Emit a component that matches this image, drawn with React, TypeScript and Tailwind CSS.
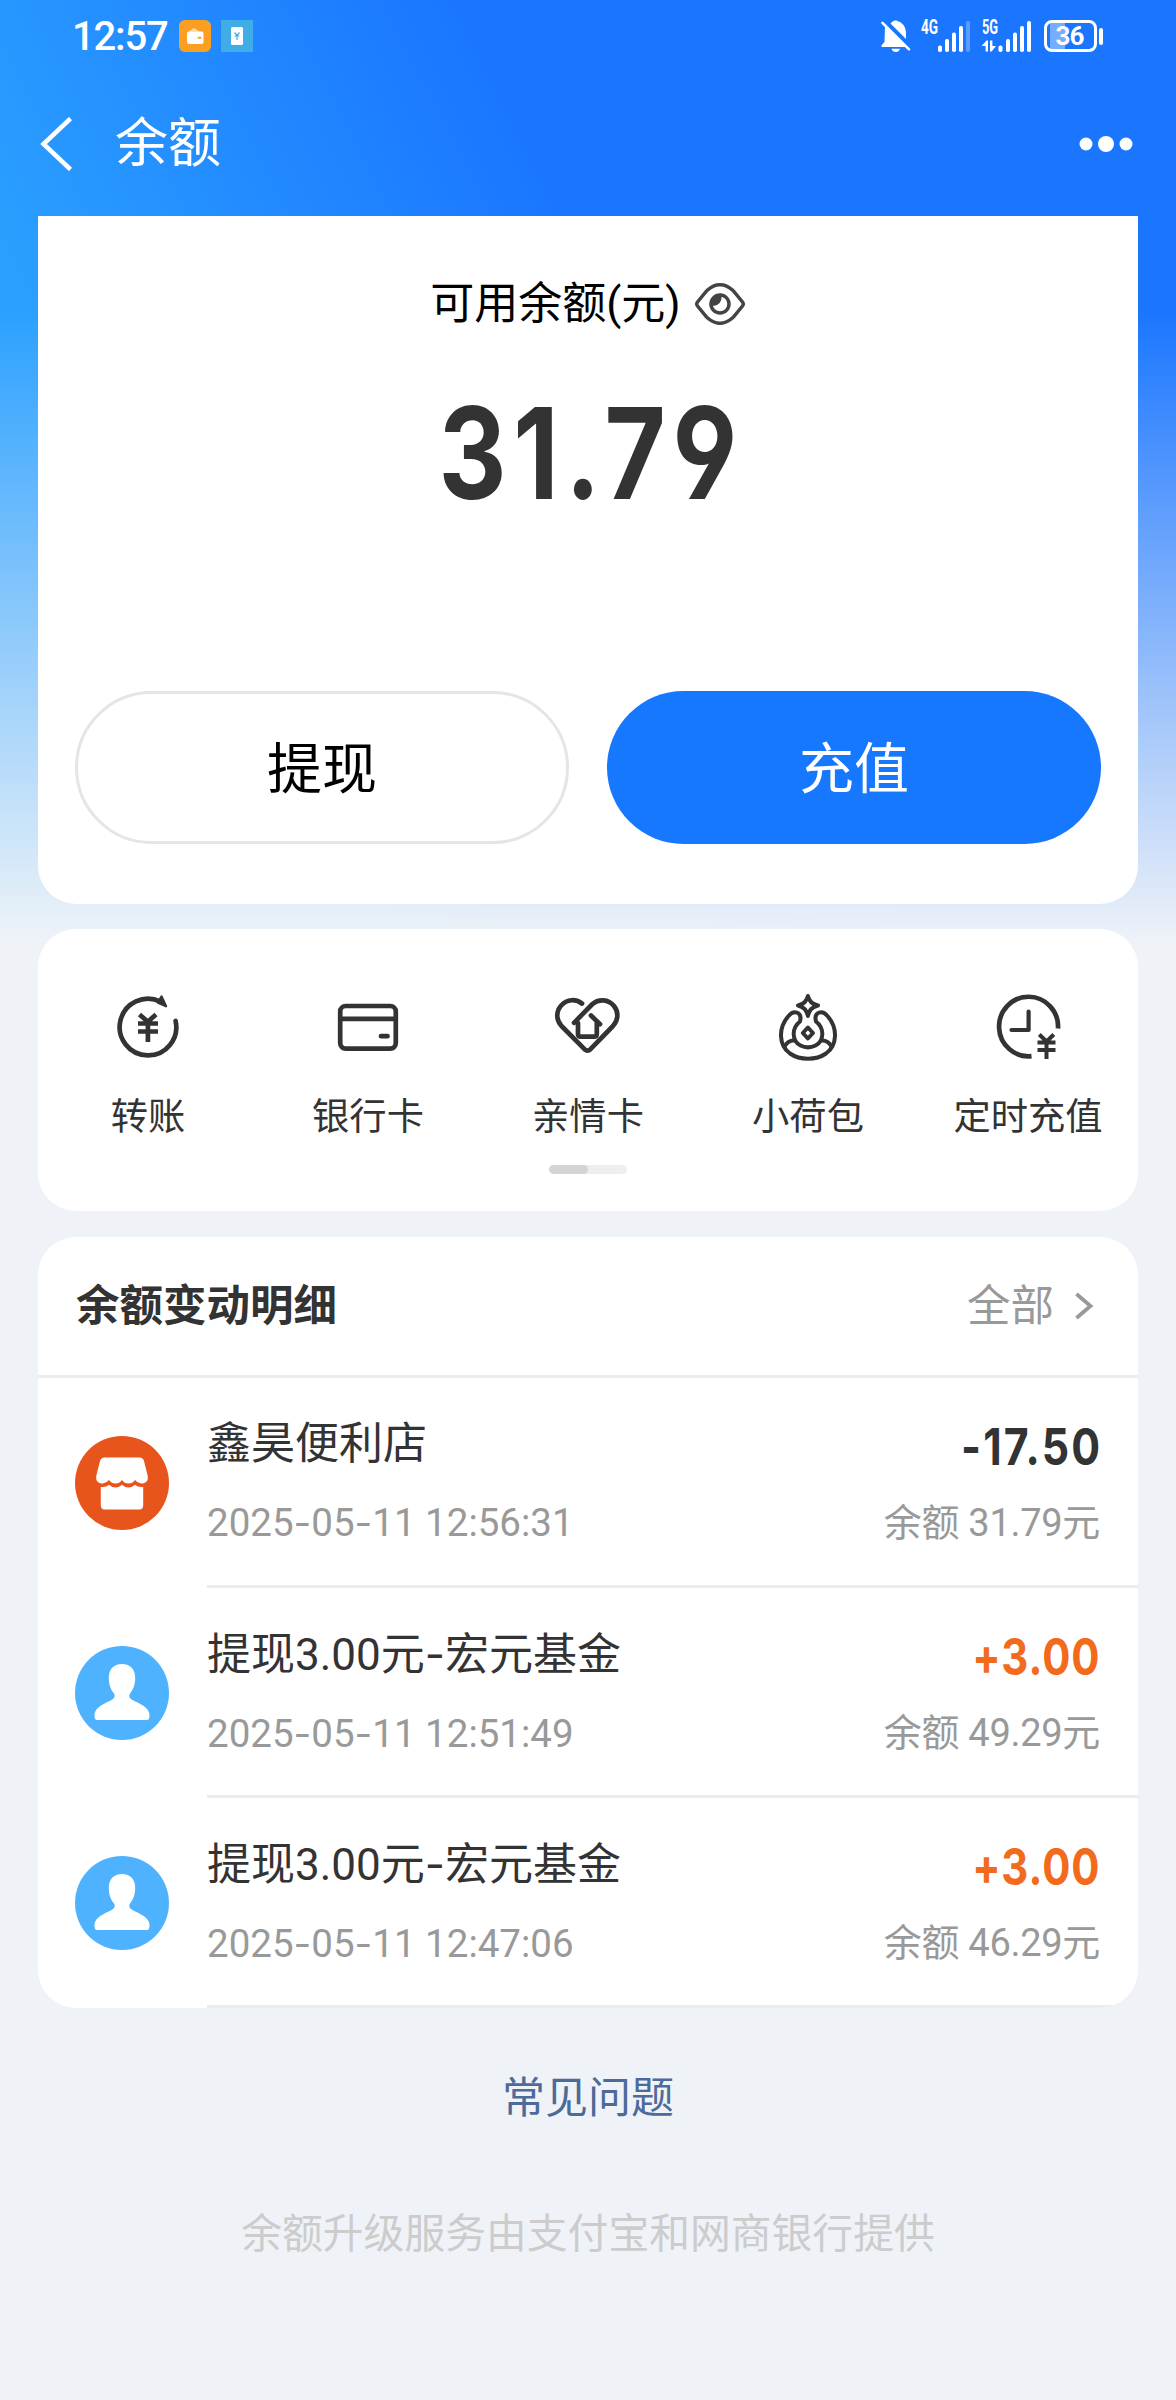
import React from "react";

type Entry = {
  kind: "shop" | "person";
  title: string;
  time: string;
  amount: string;
  balance: string;
};

const entries: Entry[] = [
  { kind: "shop", title: "鑫昊便利店", time: "2025-05-11 12:56:31", amount: "-17.50", balance: "余额 31.79元" },
  { kind: "person", title: "提现3.00元-宏元基金", time: "2025-05-11 12:51:49", amount: "+3.00", balance: "余额 49.29元" },
  { kind: "person", title: "提现3.00元-宏元基金", time: "2025-05-11 12:47:06", amount: "+3.00", balance: "余额 46.29元" },
];

const iconProps = {
  width: 70,
  height: 70,
  viewBox: "0 0 70 70",
  fill: "none",
  stroke: "#333",
  strokeWidth: 4.7,
  strokeLinecap: "round" as const,
  strokeLinejoin: "round" as const,
};

function TransferIcon() {
  return (
    <svg {...iconProps}>
      <path d="M62.6 29A28.3 28.3 0 1 1 47.5 9.7" />
      <path d="M48.5 4.5 53 14.2l-8-3.6z" fill="#333" strokeWidth="2.4" />
      <path d="M26.5 22.5 34.8 29.8 43 22.5M25 31.5h20M25 39.5h20M34.9 30v20" strokeLinecap="butt" />
    </svg>
  );
}

function BankCardIcon() {
  return (
    <svg {...iconProps}>
      <rect x="7.2" y="14" width="55.6" height="42.6" rx="5.5" />
      <path d="M7.5 26.8h55M48 44.2h6.5" />
    </svg>
  );
}

function FamilyCardIcon() {
  return (
    <svg {...iconProps}>
      <path d="M29 11.600C23 6.500 14 7.200 8.200 13.500 2.800 19.500 3 28 8.500 34L31.500 57.200Q34.500 60 37.500 57.200L60 34C65.500 28 65.800 20 61 14 55.500 7 45.500 6.600 39.500 12L21 30.800" />
      <path d="M38 23.500 47 32.200M25 31v11q0 2.700 2.700 2.700h13.400q2.700 0 2.700-2.700V31" />
    </svg>
  );
}

function PouchIcon() {
  return (
    <svg {...iconProps} strokeWidth={4}>
      <path d="M34.900 4Q36.400 11.500 45 13.500 36.400 15.500 34.900 24 33.400 15.500 25 13.500 33.400 11.500 34.900 4Z" />
      <path d="M27 29.500C29.500 20 21 17.500 15.500 24 5 36 5.500 53 17 61.500 27 68.500 43 68.500 53 61.500 64.500 53 65 36 54.500 24 49 17.500 40.500 20 43 29.500 51.500 36 51.500 49 42.500 53.500 37.500 56 32.500 56 27.500 53.500 18.500 49 18.500 36 27 29.500Z" />
      <path d="M11.500 54.500q3.500-6 9-6M58.500 54.500q-3.500-6-9-6" />
      <path d="M34.900 35.500 40 41 34.900 46.500 29.800 41z" />
    </svg>
  );
}

function ScheduleIcon() {
  return (
    <svg {...iconProps} strokeLinecap="butt">
      <path d="M65 36.500A29.500 29.800 0 1 0 38.500 64.200" />
      <path d="M35.600 19.500V38H18.500" strokeLinecap="round" strokeWidth="4.200" />
      <path d="M46.300 42.500 53.500 49.500 60.800 42.500M44.500 50.500h18M44.500 58h18M53.500 49v18" strokeWidth="4" />
    </svg>
  );
}

function ShopAvatar() {
  return (
    <svg width="94" height="94" viewBox="0 0 94 94" className="shrink-0">
      <circle cx="47" cy="47" r="47" fill="#e8551c" />
      <path
        d="M29.500 21.500h35q3.500 0 4.500 3.500l3.500 14q.8 4.500-.5 6-2.500 3-6 2.500-3.500-.3-6-3.500-2.500 3.500-6.500 3.500t-6.500-3.500q-2.500 3.500-6.500 3.500T34 44q-2.500 3.200-6 3.500-3.500.5-6-2.500-1.300-1.500-.5-6L25 25q1-3.500 4.500-3.500Z"
        fill="#fff"
      />
      <path
        d="M25.800 50.800q4.700 1 8.200-2 3 2.800 6.500 2.800t6.500-2.800q3 2.800 6.500 2.800t6.500-2.800q3.500 3 8.200 2V69q0 4.500-4 4.500H29.800q-4 0-4-4.500Z"
        fill="#fff"
      />
    </svg>
  );
}

function PersonAvatar() {
  return (
    <svg width="94" height="94" viewBox="0 0 94 94" className="shrink-0">
      <circle cx="47" cy="47" r="47" fill="#4eb2ff" />
      <path
        d="M47 18c8.500 0 13.200 5.500 13.200 14 0 7-2.200 11.500-5.200 15.500-1.500 3-.5 4.500 2 6.200C64 57.500 74.500 61 74.500 69q.2 5-2.500 5H22q-2.700 0-2.500-5c0-8 10.500-11.500 17.500-15.300 2.500-1.700 3.500-3.200 2-6.200-3-4-5.200-8.500-5.200-15.500C33.800 23.500 38.500 18 47 18Z"
        fill="#fff"
      />
    </svg>
  );
}

function StatusBar() {
  return (
    <div className="flex h-[72px] items-center pr-[73px] pl-[72px]">
      <span className="w-[98px] pt-[2px] text-[40px] leading-[70px] font-medium tracking-[-1.200px] text-white">12:57</span>
      <svg width="32" height="32" viewBox="0 0 32 32" className="ml-[9px]">
        <rect width="32" height="32" rx="6" fill="#fb9f22" />
        <path d="M10 11.500 15 8l5.500 3.500z" fill="#ffdcae" />
        <rect x="8" y="11.500" width="16.500" height="12.500" rx="2" fill="#fff" />
        <rect x="18.500" y="16.800" width="4" height="2" rx="1" fill="#fb9f22" />
      </svg>
      <svg width="32" height="32" viewBox="0 0 32 32" className="ml-[10px]">
        <rect width="32" height="32" fill="#41ade6" />
        <rect x="10" y="7" width="12" height="18" rx="1.500" fill="#fff" />
        <path d="M13.500 12.500 16 15.500 18.500 12.500M13.500 16h5M16 15.500V20" stroke="#41ade6" strokeWidth="1.200" fill="none" />
      </svg>
      <div className="ml-auto flex items-center">
        <svg width="30" height="32" viewBox="0 0 30 32">
          <path d="M9.500 3.500Q11 1.500 13.500 0.500h2Q24 3 25 12v7Z" fill="#fff" />
          <path d="M4 6 25 27H.5v-1.800L3.500 22Z" fill="#fff" />
          <path d="M10.500 28.800h8.500q-1 3.200-4.200 3.200t-4.300-3.200Z" fill="#fff" />
          <path d="M1.500 2.800 28 29.300" stroke="#fff" strokeWidth="2.600" strokeLinecap="round" />
        </svg>
        <div className="relative ml-[10px] h-8 w-[50px]">
          <span className="absolute top-0 left-0 origin-left scale-x-[0.68] text-[20px] leading-[15px] font-bold text-white">4G</span>
          <svg width="50" height="32" viewBox="0 0 50 32" fill="#fff">
            <rect x="17" y="25.500" width="4" height="6.500" rx="1.800" />
            <rect x="24" y="19" width="4" height="13" rx="1.800" />
            <rect x="31" y="12.500" width="4" height="19.500" rx="1.800" />
            <rect x="38" y="6" width="4" height="26" rx="1.800" />
            <rect x="45" y="1" width="4" height="31" rx="1.800" opacity=".28" />
          </svg>
        </div>
        <div className="relative ml-[11px] h-8 w-[50px]">
          <span className="absolute top-0 left-0 origin-left scale-x-[0.64] text-[20px] leading-[15px] font-bold text-white">5G</span>
          <svg width="50" height="32" viewBox="0 0 50 32" fill="#fff">
            <path d="M0 25.500 4.500 20.500H6V31.500H3.600V26H0ZM8 20.500h2.400V26H14L9.600 31.500H8Z" />
            <rect x="16.500" y="25.500" width="4" height="6.500" rx="1.800" />
            <rect x="24" y="19" width="4" height="13" rx="1.800" />
            <rect x="31" y="12.500" width="4" height="19.500" rx="1.800" />
            <rect x="38" y="6" width="4" height="26" rx="1.800" />
            <rect x="45" y="1" width="4" height="31" rx="1.800" />
          </svg>
        </div>
        <div className="ml-[12px] flex h-8 w-[53px] items-center justify-center rounded-[8px] border-[3px] border-white bg-[linear-gradient(to_right,transparent_3px,#75adff_3px,#75adff_18px,transparent_18px)]">
          <span className="-ml-[2px] text-[26px] leading-[26px] font-bold tracking-[-1px] text-white">36</span>
        </div>
        <div className="ml-[2px] h-[17px] w-[4px] rounded-full bg-white" />
      </div>
    </div>
  );
}

function TitleBar() {
  return (
    <header className="flex h-[144px] items-center pr-[43px] pl-[40px]">
      <svg width="34" height="54" viewBox="0 0 34 54" fill="none" stroke="#fff" strokeWidth="4.500">
        <path d="M30.500 1.500 3.500 27 30.500 52.500" />
      </svg>
      <h1 className="ml-[41px] text-[53px] leading-[78px] font-normal text-white">余额</h1>
      <svg width="54" height="18" viewBox="0 0 54 18" fill="#fff" className="ml-auto">
        <circle cx="7" cy="9" r="6.500" />
        <circle cx="27" cy="9" r="8" />
        <circle cx="47" cy="9" r="6.500" />
      </svg>
    </header>
  );
}

function Shortcut({ label, icon }: { label: string; icon: React.ReactNode }) {
  return (
    <div className="flex w-[220px] flex-col items-center">
      {icon}
      <span className="mt-[29px] text-[37.300px] leading-[52px] text-[#333]">{label}</span>
    </div>
  );
}

/** Text whose hyphens are set in a face with a wider, lighter dash. */
function Dashed({ text }: { text: string }) {
  return (
    <>
      {text.split("-").map((part, i) => (
        <React.Fragment key={i}>
          {i > 0 && <span className="font-['Inter']">-</span>}
          {part}
        </React.Fragment>
      ))}
    </>
  );
}

function EntryRow({ entry }: { entry: Entry }) {
  return (
    <li className="flex h-[210px] pl-[37px]">
      <div className="flex w-[132px] items-center">{entry.kind === "shop" ? <ShopAvatar /> : <PersonAvatar />}</div>
      <div className="flex flex-1 justify-between border-b-[3px] border-[#ececec] pr-[38px]">
        <div className="flex flex-col items-start pt-[36px]">
          <span className="text-[44px] leading-[60px] text-[#333]">
            <Dashed text={entry.title} />
          </span>
          <span className="mt-[18px] text-[38.500px] leading-[60px] whitespace-nowrap text-[#999]">
            <Dashed text={entry.time} />
          </span>
        </div>
        <div className="flex flex-col items-end pt-[36px]">
          <span
            className={
              entry.amount.startsWith("+")
                ? "-mr-[1px] origin-right scale-x-[0.82] font-['Inter'] text-[51px] leading-[66px] font-bold tracking-[1.200px] text-[#f26b1d] [font-feature-settings:'cv03','cv04']"
                : "-mr-[2px] origin-right scale-x-[0.84] font-['Inter'] text-[51px] leading-[66px] font-bold tracking-[2.600px] text-[#333] [font-feature-settings:'cv03','cv04']"
            }
          >
            {entry.amount}
          </span>
          <span className="mt-[13px] text-[38px] leading-[60px] tracking-[-0.300px] text-[#999]">{entry.balance}</span>
        </div>
      </div>
    </li>
  );
}

export default function App() {
  return (
    <div className="h-[2400px] w-[1176px] overflow-hidden bg-[#eff3f8] font-['Roboto','Noto_Sans_CJK_SC',sans-serif]">
      <div className="bg-[linear-gradient(to_bottom,rgba(239,243,248,0)_310px,#eff3f8_944px),linear-gradient(63deg,#2ba0ff_310px,#1a76ff_829px)] bg-[length:1176px_944px] bg-no-repeat">
        <StatusBar />
        <TitleBar />
        <main className="mx-[38px]">
          <section className="flex h-[688px] flex-col items-center rounded-b-[38px] bg-white px-[37px] pt-[56px]">
            <div className="flex items-center">
              <span className="text-[44px] leading-[64px] text-black">可用余额(元)</span>
              <svg width="50" height="42" viewBox="0 0 50 42" fill="none" stroke="#444" strokeWidth="3.500" className="mr-[1px] ml-[14px]">
                <path d="M2.500 19 12 7.500Q25-4 38 7.500L47.500 19q1.500 2 0 4L38 34.500Q25 46 12 34.500L2.500 23Q1 21 2.500 19Z" />
                <circle cx="25" cy="21" r="9" />
                <path d="M25 12.500A9 9 0 0 0 16.500 21H19Q25 20 25 12.500Z" fill="#444" />
              </svg>
            </div>
            <div className="mt-[40px] scale-x-[0.83] pl-[8px] font-['Inter'] text-[127px] leading-[154px] font-bold tracking-[8px] text-[#333] [font-feature-settings:'cv03','cv04']">
              31.79
            </div>
            <div className="mt-[161px] grid w-full grid-cols-2 gap-[38px]">
              <button className="h-[153px] rounded-full border-[3px] border-[#e5e5e5] pt-[3px] text-[55px] text-black">提现</button>
              <button className="h-[153px] rounded-full bg-[#1677ff] pt-[3px] text-[55px] text-white">充值</button>
            </div>
          </section>

          <section className="mt-[25px] flex h-[282px] flex-col items-center rounded-[38px] bg-white pt-[63px]">
            <div className="flex">
              <Shortcut label="转账" icon={<TransferIcon />} />
              <Shortcut label="银行卡" icon={<BankCardIcon />} />
              <Shortcut label="亲情卡" icon={<FamilyCardIcon />} />
              <Shortcut label="小荷包" icon={<PouchIcon />} />
              <Shortcut label="定时充值" icon={<ScheduleIcon />} />
            </div>
            <div className="mt-[22px] h-[9px] w-[78px] overflow-hidden rounded-full bg-[#eee]">
              <div className="h-full w-[39px] rounded-full bg-[#d4d4d4]" />
            </div>
          </section>

          <section className="mt-[26px] h-[771px] overflow-hidden rounded-[38px] bg-white">
            <div className="flex h-[141px] items-center border-b-[3px] border-[#ededed] pr-[44px] pl-[38px]">
              <h2 className="pt-[2px] text-[43.500px] leading-[60px] font-bold text-[#333]">余额变动明细</h2>
              <span className="ml-auto pt-[2px] text-[43.500px] leading-[60px] text-[#999]">全部</span>
              <svg width="20" height="28" viewBox="0 0 20 28" fill="none" stroke="#999" strokeWidth="3.800" className="ml-[20px]">
                <path d="M2.500 2 16.500 14 2.500 26" />
              </svg>
            </div>
            <ul>
              {entries.map((entry) => (
                <EntryRow key={entry.time} entry={entry} />
              ))}
            </ul>
          </section>
        </main>
      </div>
      <footer className="flex flex-col items-center">
        <a className="mt-[58px] text-[43px] leading-[64px] text-[#4c6b99]">常见问题</a>
        <p className="mt-[74px] text-[40.800px] leading-[60px] text-[#ccc]">余额升级服务由支付宝和网商银行提供</p>
      </footer>
    </div>
  );
}
